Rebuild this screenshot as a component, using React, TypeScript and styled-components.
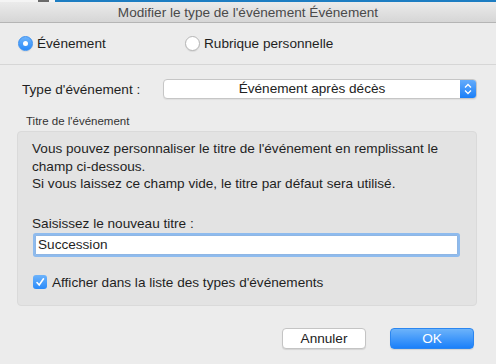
import styled, { createGlobalStyle } from "styled-components"

const Global = createGlobalStyle`
  body {
    margin: 0;
    background: #ececec;
    font-family: "Liberation Sans", Arial, sans-serif;
    color: #1f1f1f;
  }`

const Window = styled.div`
  width: 496px;
  height: 364px;
  display: flex;
  flex-direction: column;
  background: #ececec;
  overflow: hidden;
  font-size: 13.6px;`

const BehindStrip = styled.div`
  display: flex;
  height: 2px;
  background: #f4f4f4;`

const StripPart = styled.div<{ $w: number; $c: string }>`
  width: ${p => p.$w}px;
  flex: ${p => (p.$w ? "none" : "1")};
  background: ${p => p.$c};`

const TitleBar = styled.div`
  height: 20px;
  display: flex;
  align-items: center;
  justify-content: center;
  background: linear-gradient(#ebebeb, #d6d6d6);
  border-bottom: 1px solid #b5b5b5;
  color: #4a4a4a;`

const RadioRow = styled.div`
  height: 41px;
  display: flex;
  align-items: center;
  padding-left: 18px;`

const RadioItem = styled.label<{ $w?: number }>`
  display: flex;
  align-items: center;
  gap: 4px;
  width: ${p => (p.$w ? `${p.$w}px` : "auto")};`

const RadioDot = styled.span<{ $on?: boolean }>`
  width: 15px;
  height: 15px;
  box-sizing: border-box;
  border-radius: 50%;
  display: flex;
  align-items: center;
  justify-content: center;
  background: ${p => (p.$on ? "linear-gradient(#6db3fb, #2a8bfa)" : "#fff")};
  border: 1px solid ${p => (p.$on ? "#3a8ff0" : "#b5b5b5")};
  box-shadow: 0 1px 1px rgba(0, 0, 0, 0.08);

  &::after {
    content: "";
    display: ${p => (p.$on ? "block" : "none")};
    width: 5px;
    height: 5px;
    border-radius: 50%;
    background: #fff;
  }`

const Separator = styled.div`
  height: 1px;
  background: #d6d6d6;`

const Body = styled.div`
  display: flex;
  flex-direction: column;
  padding: 14px 19px 0 17px;`

const TypeRow = styled.div`
  display: flex;
  align-items: center;
  height: 20px;
  padding-left: 5px;`

const TypeLabel = styled.span`
  width: 141px;`

const Select = styled.div`
  flex: 1;
  height: 20px;
  box-sizing: border-box;
  display: flex;
  border: 1px solid #c6c6c6;
  border-radius: 4px;
  background: #fff;
  box-shadow: 0 1px 1px rgba(0, 0, 0, 0.06);
  overflow: hidden;`

const SelectValue = styled.span`
  flex: 1;
  text-align: center;
  line-height: 18px;
  color: #222;`

const Stepper = styled.span`
  width: 16px;
  display: flex;
  align-items: center;
  justify-content: center;
  background: linear-gradient(#64acfb, #1a7ff8);`

const GroupTitle = styled.div`
  margin: 15px 0 0 9px;
  font-size: 11.5px;
  color: #333;
  line-height: 14px;`

const Group = styled.div`
  margin-top: 3px;
  height: 175px;
  box-sizing: border-box;
  background: #e3e3e3;
  border: 1px solid #dadada;
  border-radius: 4px;
  padding: 8px 15px 0 14px;
  display: flex;
  flex-direction: column;`

const Info = styled.p`
  margin: 0;
  line-height: 17.5px;
  color: #1f1f1f;`

const FieldLabel = styled.div`
  margin-top: 23px;
  line-height: 16px;`

const TextInput = styled.div`
  margin: 3px 3px 0 3px;
  height: 20px;
  box-sizing: border-box;
  background: #fff;
  border: 1px solid #8fb6e4;
  box-shadow: 0 0 0 2px #8ebbee;
  border-radius: 1px;
  padding-left: 2px;
  line-height: 18px;`

const CheckRow = styled.label`
  margin-top: 20px;
  display: flex;
  align-items: center;
  gap: 5px;
  padding-left: 1px;`

const CheckBox = styled.span`
  width: 14px;
  height: 14px;
  border-radius: 3px;
  background: linear-gradient(#6db3fb, #2a8bfa);
  display: flex;
  align-items: center;
  justify-content: center;`

const Footer = styled.div`
  display: flex;
  justify-content: flex-end;
  gap: 24px;
  padding: 22px 22px 0 0;`

const Button = styled.button<{ $primary?: boolean }>`
  width: 84px;
  height: 21px;
  box-sizing: border-box;
  font-family: inherit;
  font-size: 13.6px;
  border-radius: 4px;
  padding: 0;
  border: 1px solid ${p => (p.$primary ? "#2b86f0" : "#c4c4c4")};
  background: ${p => (p.$primary ? "linear-gradient(#6cb3fa, #1b80fa)" : "#fff")};
  color: ${p => (p.$primary ? "#fff" : "#222")};
  box-shadow: 0 1px 1px rgba(0, 0, 0, 0.1);`

export default function App() {
  return (
    <Window>
      <Global />
      <BehindStrip>
        <StripPart $w={38} $c="#f4f4f4" />
        <StripPart $w={11} $c="#6a6a6a" />
        <StripPart $w={6} $c="#f4f4f4" />
        <StripPart $w={0} $c="#1d7dc2" />
      </BehindStrip>
      <TitleBar>Modifier le type de l'événement Événement</TitleBar>
      <RadioRow>
        <RadioItem $w={167}>
          <RadioDot $on />
          Événement
        </RadioItem>
        <RadioItem>
          <RadioDot />
          Rubrique personnelle
        </RadioItem>
      </RadioRow>
      <Separator />
      <Body>
        <TypeRow>
          <TypeLabel>Type d'événement :</TypeLabel>
          <Select>
            <SelectValue>Événement après décès</SelectValue>
            <Stepper>
              <svg width="8" height="12" viewBox="0 0 8 12" fill="none" stroke="#fff" strokeWidth="1.3">
                <path d="M1 4.5 L4 1.5 L7 4.5" />
                <path d="M1 7.5 L4 10.5 L7 7.5" />
              </svg>
            </Stepper>
          </Select>
        </TypeRow>
        <GroupTitle>Titre de l'événement</GroupTitle>
        <Group>
          <Info>
            Vous pouvez personnaliser le titre de l'événement en remplissant le
            <br />
            champ ci-dessous.
            <br />
            Si vous laissez ce champ vide, le titre par défaut sera utilisé.
          </Info>
          <FieldLabel>Saisissez le nouveau titre :</FieldLabel>
          <TextInput>Succession</TextInput>
          <CheckRow>
            <CheckBox>
              <svg width="10" height="10" viewBox="0 0 10 10" fill="none" stroke="#fff" strokeWidth="1.6" strokeLinecap="round">
                <path d="M2 5.5 L4.2 8 L8.5 1.8" />
              </svg>
            </CheckBox>
            Afficher dans la liste des types d'événements
          </CheckRow>
        </Group>
      </Body>
      <Footer>
        <Button>Annuler</Button>
        <Button $primary>OK</Button>
      </Footer>
    </Window>
  )
}
